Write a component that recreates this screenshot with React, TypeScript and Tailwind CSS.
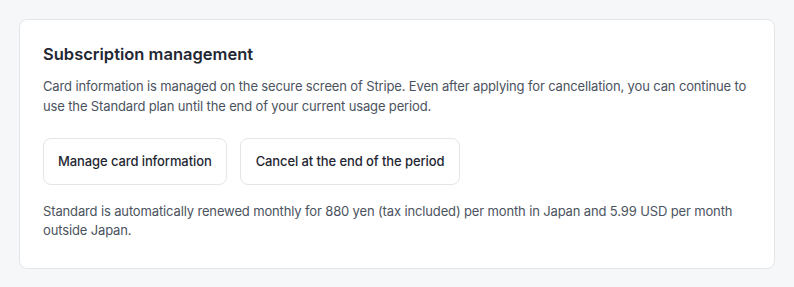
export default function App() {
  return (
    <div className="min-h-screen bg-[#f6f7f8] px-[19px] pt-[19px] pb-4" style={{ fontFamily: "Inter, 'Noto Sans', sans-serif" }}>
      <div className="rounded-lg border border-[#e3e5e8] bg-white px-[23px] pt-[22px] pb-[28px]">
        <h2 className="text-[16.5px] font-semibold leading-6 text-[#1f2733]">Subscription management</h2>
        <p className="mt-[11px] text-[13px] leading-[19.5px] tracking-[-0.14px] text-[#4b5360]">
          Card information is managed on the secure screen of Stripe. Even after applying for cancellation, you can continue to use the Standard plan until the end of your current usage period.
        </p>
        <div className="mt-[22px] flex gap-[13px]">
          <button className="h-[47px] rounded-lg border border-[#e3e5e8] bg-white px-[14px] text-[13px] font-medium tracking-[-0.1px] text-[#1f2733]">
            Manage card information
          </button>
          <button className="h-[47px] rounded-lg border border-[#e3e5e8] bg-white px-[15px] text-[13px] font-medium tracking-[-0.1px] text-[#1f2733]">
            Cancel at the end of the period
          </button>
        </div>
        <p className="mt-[17px] text-[13px] leading-[19px] tracking-[-0.14px] text-[#4b5360]">
          Standard is automatically renewed monthly for 880 yen (tax included) per month in Japan and 5.99 USD per month outside Japan.
        </p>
      </div>
    </div>
  );
}
